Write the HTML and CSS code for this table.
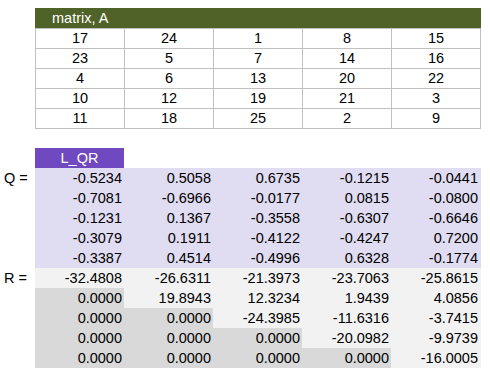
FILE: index.html
```html
<!DOCTYPE html>
<html lang="en">
<head>
    <meta charset="UTF-8">
    <title>matrix, A | L_QR</title>
    <link rel="stylesheet" href="styles.css">
</head>
<body>

    <div class="sheet">

        <div class="grid matrix">
            <div class="label"></div>
            <div class="head-green">matrix, A</div>

            <div class="label"></div>
            <div class="cell">17</div><div class="cell">24</div><div class="cell">1</div><div class="cell">8</div><div class="cell last">15</div>
            <div class="label"></div>
            <div class="cell">23</div><div class="cell">5</div><div class="cell">7</div><div class="cell">14</div><div class="cell last">16</div>
            <div class="label"></div>
            <div class="cell">4</div><div class="cell">6</div><div class="cell">13</div><div class="cell">20</div><div class="cell last">22</div>
            <div class="label"></div>
            <div class="cell">10</div><div class="cell">12</div><div class="cell">19</div><div class="cell">21</div><div class="cell last">3</div>
            <div class="label"></div>
            <div class="cell bottom">11</div><div class="cell bottom">18</div><div class="cell bottom">25</div><div class="cell bottom">2</div><div class="cell bottom last">9</div>
        </div>

        <div class="grid result" id="result">
            <div class="label"></div>
            <div class="head-purple">L_QR</div>
            <div class="filler"></div>
        </div>

    </div>

    <script>
        const Q = [
            ["-0.5234", "0.5058", "0.6735", "-0.1215", "-0.0441"],
            ["-0.7081", "-0.6966", "-0.0177", "0.0815", "-0.0800"],
            ["-0.1231", "0.1367", "-0.3558", "-0.6307", "-0.6646"],
            ["-0.3079", "0.1911", "-0.4122", "-0.4247", "0.7200"],
            ["-0.3387", "0.4514", "-0.4996", "0.6328", "-0.1774"]
        ];
        const R = [
            ["-32.4808", "-26.6311", "-21.3973", "-23.7063", "-25.8615"],
            ["0.0000", "19.8943", "12.3234", "1.9439", "4.0856"],
            ["0.0000", "0.0000", "-24.3985", "-11.6316", "-3.7415"],
            ["0.0000", "0.0000", "0.0000", "-20.0982", "-9.9739"],
            ["0.0000", "0.0000", "0.0000", "0.0000", "-16.0005"]
        ];

        const grid = document.getElementById("result");

        function addRows(rows, name, cls){
            rows.forEach((row, i) => {
                const label = document.createElement("div");
                label.className = "label";
                label.textContent = i == 0 ? name + " =" : "";
                grid.appendChild(label);

                row.forEach((value, j) => {
                    const cell = document.createElement("div");
                    let c = "num " + cls;
                    if(cls == "r"){
                        c += j >= i ? " upper" : " lower";
                    }
                    if(j == 4) c += " last";
                    cell.className = c;
                    cell.textContent = value;
                    grid.appendChild(cell);
                })
            })
        }

        addRows(Q, "Q", "q");
        addRows(R, "R", "r");
    </script>

</body>
</html>
```

FILE: styles.css
```css
* {
    box-sizing: border-box;
    margin: 0;
}

body {
    font-family: "Liberation Sans", Arial, sans-serif;
    font-size: 14.5px;
    color: #000;
    background-color: #fff;
}

.sheet {
    padding-top: 8px;
    display: flex;
    flex-direction: column;
    gap: 19px;
}

.grid {
    display: grid;
    grid-template-columns: 35px 89px 89px 89px 89px 90px;
}

.label {
    height: 20px;
    line-height: 20px;
    padding-left: 4px;
}

.head-green {
    grid-column: span 5;
    height: 20px;
    line-height: 20px;
    background-color: #4f6228;
    color: #fff;
    padding-left: 17px;
}

.head-purple {
    height: 20px;
    line-height: 20px;
    background-color: #7048c0;
    color: #fff;
    text-align: center;
}

.filler {
    grid-column: span 4;
}

.cell {
    height: 20px;
    line-height: 19px;
    text-align: center;
    border-top: 1px solid #c0c0c0;
    border-left: 1px solid #c0c0c0;
}

.cell.last {
    border-right: 1px solid #c0c0c0;
}

.cell.bottom {
    height: 21px;
    border-bottom: 1px solid #c0c0c0;
}

.num {
    height: 20px;
    line-height: 20px;
    text-align: right;
    padding-right: 2px;
}

.num.last {
    padding-right: 3px;
}

.q {
    background-color: #e0dcf1;
}

.r.upper {
    background-color: #f2f2f2;
}

.r.lower {
    background-color: #d9d9d9;
}
```
